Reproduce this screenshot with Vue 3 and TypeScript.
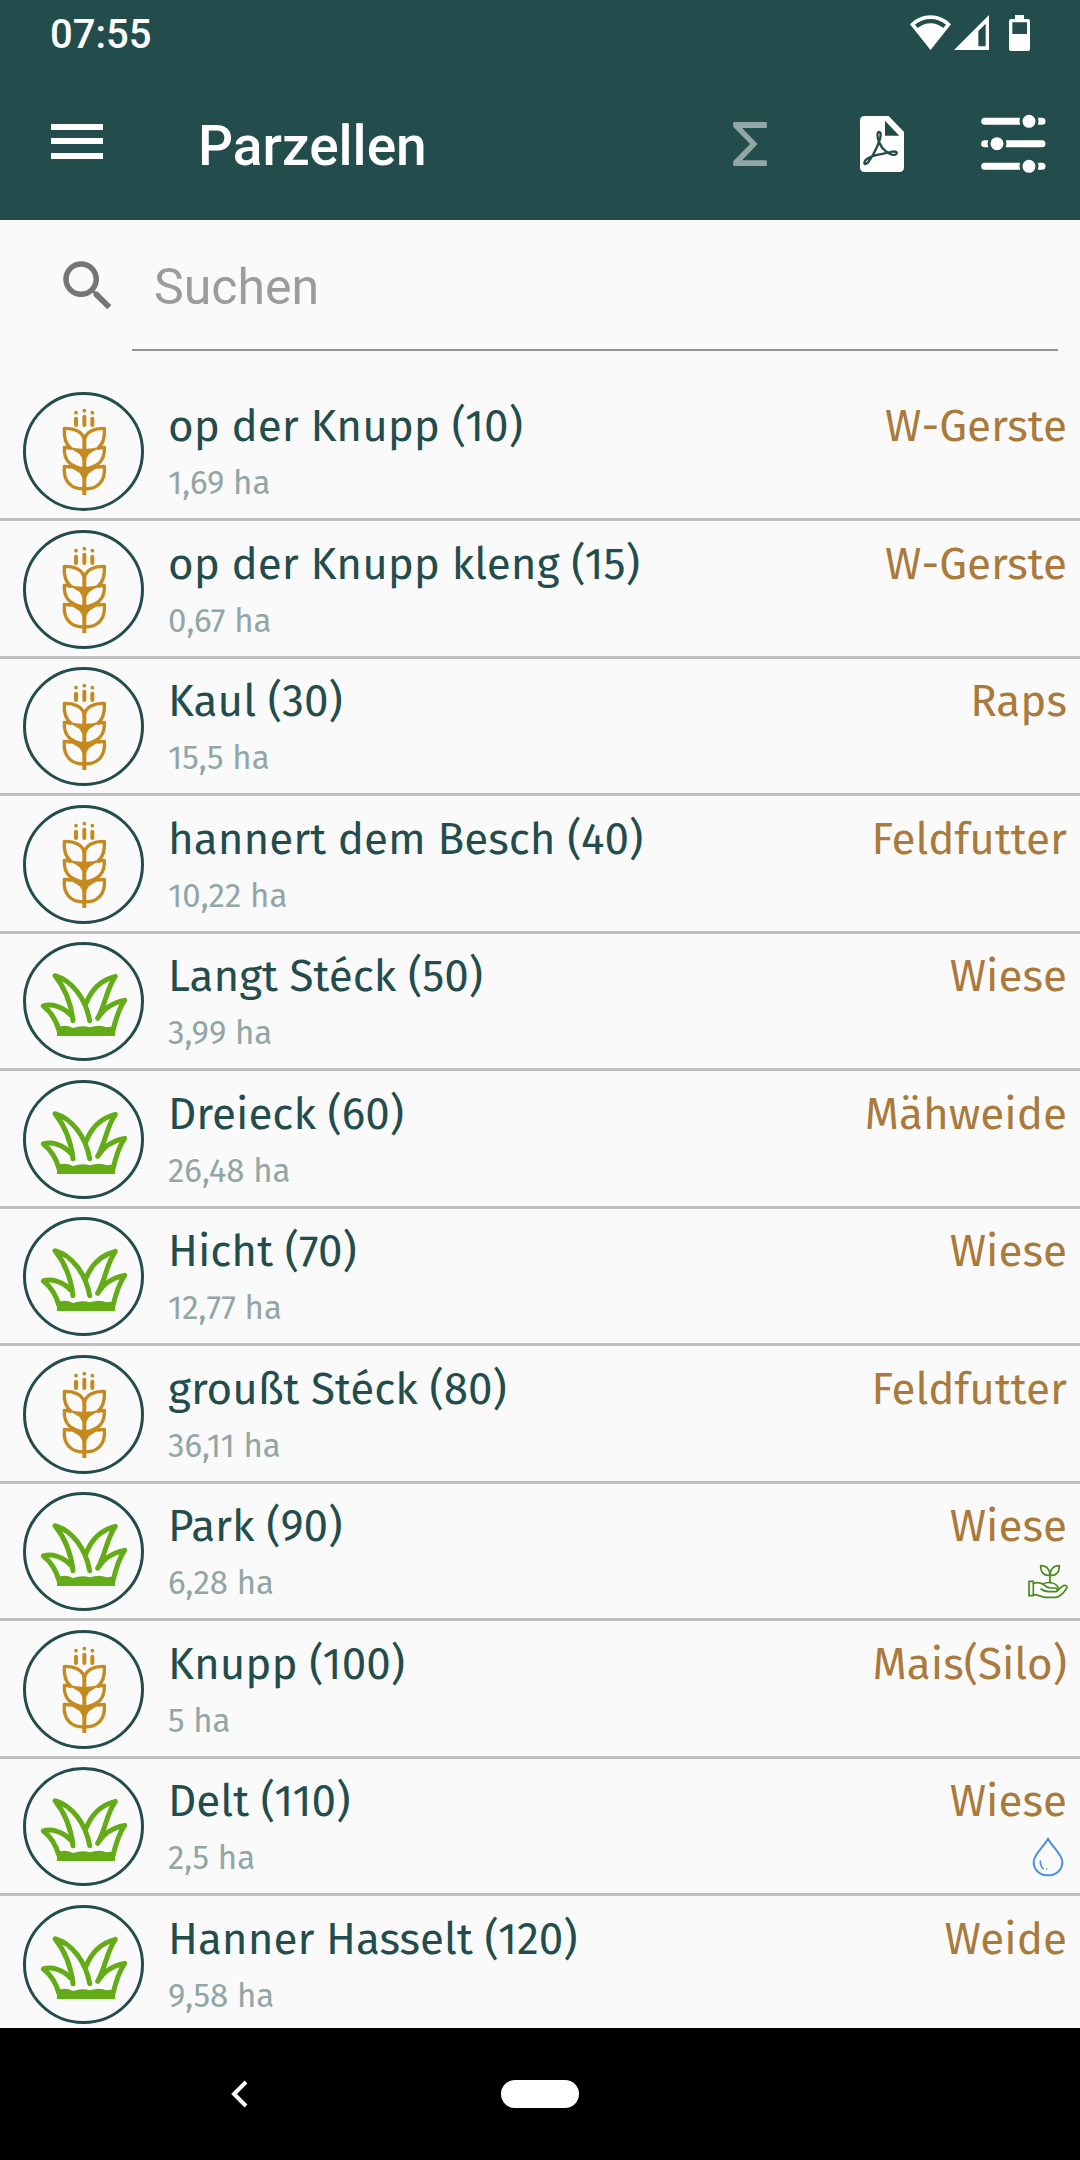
<script setup lang="ts">
import { ref, computed } from 'vue'

type Kind = 'grain' | 'grass'
type Badge = 'plant' | 'water'

interface Parcel {
  name: string
  area: string
  crop: string
  kind: Kind
  badge?: Badge
}

const parcels: Parcel[] = [
  { name: 'op der Knupp (10)', area: '1,69 ha', crop: 'W-Gerste', kind: 'grain' },
  { name: 'op der Knupp kleng (15)', area: '0,67 ha', crop: 'W-Gerste', kind: 'grain' },
  { name: 'Kaul (30)', area: '15,5 ha', crop: 'Raps', kind: 'grain' },
  { name: 'hannert dem Besch (40)', area: '10,22 ha', crop: 'Feldfutter', kind: 'grain' },
  { name: 'Langt Stéck (50)', area: '3,99 ha', crop: 'Wiese', kind: 'grass' },
  { name: 'Dreieck (60)', area: '26,48 ha', crop: 'Mähweide', kind: 'grass' },
  { name: 'Hicht (70)', area: '12,77 ha', crop: 'Wiese', kind: 'grass' },
  { name: 'groußt Stéck (80)', area: '36,11 ha', crop: 'Feldfutter', kind: 'grain' },
  { name: 'Park (90)', area: '6,28 ha', crop: 'Wiese', kind: 'grass', badge: 'plant' },
  { name: 'Knupp (100)', area: '5 ha', crop: 'Mais(Silo)', kind: 'grain' },
  { name: 'Delt (110)', area: '2,5 ha', crop: 'Wiese', kind: 'grass', badge: 'water' },
  { name: 'Hanner Hasselt (120)', area: '9,58 ha', crop: 'Weide', kind: 'grass' },
]

const query = ref('')
const visible = computed(() =>
  parcels.filter((p) => p.name.toLowerCase().includes(query.value.trim().toLowerCase())),
)
</script>

<template>
  <div class="screen">
    <header class="top">
      <div class="status">
        <time>07:55</time>
        <div class="signals" aria-hidden="true">
          <svg class="wifi" width="41" height="36" viewBox="0 0 123 108">
            <path fill="#fff" d="M0 28C36-8 87-8 123 28L61.500 105Z" />
            <path fill="none" stroke="#234d4c" stroke-width="13" d="M19 34C44 13 79 13 104 34" />
          </svg>
          <svg class="cell" width="35" height="36" viewBox="0 0 105 108">
            <path fill="#fff" fill-rule="evenodd" d="M105 0V105H0ZM95 26L73 48V94H95Z" />
          </svg>
          <svg width="21" height="36" viewBox="0 0 63 108">
            <path
              fill="#fff"
              fill-rule="evenodd"
              d="M18 0H45V12H57Q63 12 63 18V102Q63 108 57 108H6Q0 108 0 102V18Q0 12 6 12H18ZM10 22V57H54V22Z"
            />
          </svg>
        </div>
      </div>
      <div class="bar">
        <button class="icon menu" type="button" aria-label="Menü">
          <svg width="52" height="36" viewBox="0 0 52 36">
            <path fill="#fff" d="M0 0H52V6H0ZM0 14H52V20H0ZM0 29H52V35H0Z" />
          </svg>
        </button>
        <h1>Parzellen</h1>
        <div class="actions">
          <button class="icon" type="button" aria-label="Summe">
            <svg width="34" height="44" viewBox="0 0 101 132">
              <path
                fill="#91a6a5"
                d="M0 0H101V18H27L73 66L27 115H101V132H0V118L51 66L0 14Z"
              />
            </svg>
          </button>
          <button class="icon" type="button" aria-label="PDF">
            <svg width="44" height="56" viewBox="0 0 132 168">
              <path
                fill="#fff"
                fill-rule="evenodd"
                d="M14 0H86L132 48V154Q132 168 118 168H14Q0 168 0 154V14Q0 0 14 0ZM75 14V59H118Z"
              />
              <path
                fill="none"
                stroke="#234d4c"
                stroke-width="7"
                stroke-linejoin="round"
                d="M57 78C52 64 50 48 57 48C65 48 62 66 57 78C50 96 38 120 27 135C20 146 13 146 13 140C13 131 27 124 43 119C61 114 82 111 97 107C108 105 113 109 109 114C103 120 88 115 78 106C67 98 61 88 57 78Z"
              />
            </svg>
          </button>
          <button class="icon" type="button" aria-label="Filter">
            <svg width="65" height="60" viewBox="0 0 195 180">
              <path
                fill="none"
                stroke="#fff"
                stroke-width="21"
                stroke-linecap="round"
                d="M11 22H183M11 89H183M11 157H183"
              />
              <g fill="#fff" stroke="#234d4c" stroke-width="9">
                <circle cx="144" cy="22" r="24" />
                <circle cx="48" cy="89" r="24" />
                <circle cx="144" cy="157" r="24" />
              </g>
            </svg>
          </button>
        </div>
      </div>
    </header>

    <main class="content">
      <div class="search">
        <label for="query" aria-label="Suchen">
          <svg width="66" height="66" viewBox="0 0 24 24">
            <path
              fill="#757575"
              d="M15.500 14h-.79l-.28-.27A6.471 6.471 0 0 0 16 9.500 6.500 6.500 0 1 0 9.500 16c1.610 0 3.090-.59 4.230-1.570l.27.28v.79l5 4.990L20.490 19l-4.990-5zm-6 0C7.010 14 5 11.990 5 9.500S7.010 5 9.500 5 14 7.010 14 9.500 11.990 14 9.500 14z"
            />
          </svg>
        </label>
        <input id="query" v-model="query" type="text" placeholder="Suchen" />
      </div>

      <ul class="list">
        <li v-for="p in visible" :key="p.name" class="row">
          <svg class="avatar" width="121" height="119" viewBox="0 0 363 357" aria-hidden="true">
            <ellipse
              cx="181.500"
              cy="178.500"
              rx="177"
              ry="174"
              fill="none"
              stroke="#234d4c"
              stroke-width="9"
            />
            <g v-if="p.kind === 'grain'" fill="none" stroke="#c58a1f" stroke-width="10">
              <path stroke-width="12" stroke-linecap="round" d="M159 80V99M184 74V99M208 80V99" />
              <path stroke-width="11" stroke-linecap="round" d="M159 62h.1M184 56h.1M208 62h.1" />
              <path stroke-width="12" d="M184 134V309" />
              <g stroke-linejoin="round" stroke-linecap="round">
                <path d="M184 142C177 117 150 109 124 109C122 136 130 157 142 168M184 142C191 117 218 109 244 109C246 136 238 157 226 168" />
                <path d="M142 168L124 166C122 206 142 224 184 231C226 224 246 206 244 166L226 168" />
                <path d="M142 225L124 223C120 268 144 291 184 291C224 291 248 268 244 223L226 225" />
              </g>
              <path
                fill="#c58a1f"
                stroke-width="5"
                d="M136 166Q160 174 184 173Q208 174 232 166Q190 176 184 212Q178 176 136 166Z"
              />
              <path
                fill="#c58a1f"
                stroke-width="5"
                d="M136 223Q160 231 184 230Q208 231 232 223Q190 233 184 269Q178 233 136 223Z"
              />
            </g>
            <g
              v-else
              fill="none"
              stroke="#64ab18"
              stroke-width="15"
              stroke-linecap="round"
              stroke-linejoin="round"
            >
              <path d="M108 266C100 236 84 210 61 192C86 184 119 194 142 218" />
              <path d="M150 236C144 184 124 136 96 101C148 116 188 170 200 236" />
              <path d="M189 184C204 146 234 114 277 103C250 142 248 186 224 229C240 202 268 182 305 175C286 202 278 232 270 266" />
              <path
                fill="#64ab18"
                stroke="none"
                d="M102 256Q126 246 150 258Q178 248 200 256Q232 246 250 256Q262 252 276 256V282H102Z"
              />
            </g>
          </svg>
          <div class="info">
            <span class="name">{{ p.name }}</span>
            <span class="area">{{ p.area }}</span>
          </div>
          <div class="use">
            <span class="crop">{{ p.crop }}</span>
            <svg
              v-if="p.badge === 'plant'"
              width="40"
              height="40"
              viewBox="143 186 120 120"
              fill="none"
              stroke="#4a8a1c"
              stroke-width="5"
              stroke-linecap="round"
              stroke-linejoin="round"
            >
              <path d="M146 244H159V287H146ZM209 248V216" />
              <path d="M208 226C190 228 180 216 181 197C199 197 209 208 208 226ZM210 226C228 228 238 216 237 197C219 197 209 208 210 226Z" />
              <path d="M159 250C172 246 182 248 190 254C196 260 202 264 210 264H224C232 264 234 274 226 275H206C196 275 188 272 182 267" />
              <path d="M188 252C200 245 226 245 234 264M231 272L246 259C254 253 264 258 258 266C250 278 240 290 226 292H198C184 292 176 284 159 284" />
            </svg>
            <svg
              v-else-if="p.badge === 'water'"
              width="40"
              height="40"
              viewBox="144 171 120 120"
              fill="none"
              stroke="#4a90e2"
              stroke-width="6"
              stroke-linecap="round"
              stroke-linejoin="round"
            >
              <path d="M204 176C190 202 161 224 161 246C161 270 180 286 204 286C228 286 247 270 247 246C247 224 218 202 204 176Z" />
              <path stroke-width="5" d="M181 243C181 255 184 262 190 266M200 267h.1" />
            </svg>
          </div>
        </li>
      </ul>
    </main>

    <nav class="nav">
      <button class="icon back" type="button" aria-label="Zurück">
        <svg width="18" height="28" viewBox="0 0 18 28">
          <path fill="none" stroke="#fff" stroke-width="4" d="M16 2L4 14L16 26" />
        </svg>
      </button>
      <button class="pill" type="button" aria-label="Startseite"></button>
      <span></span>
    </nav>
  </div>
</template>

<style>
body {
  margin: 0;
}
</style>

<style scoped>
.screen {
  display: flex;
  flex-direction: column;
  height: 100vh;
  background: #fafafa;
  color: #234d4c;
  font-family: Roboto, 'Liberation Sans', sans-serif;
}

.screen svg {
  display: block;
  flex: none;
}

.icon {
  display: block;
  padding: 0;
  border: 0;
  background: none;
}

.top {
  flex: none;
  background: #234d4c;
  color: #fff;
}

.status {
  display: flex;
  justify-content: space-between;
  align-items: center;
  height: 68px;
  padding: 0 50px;
}

.status time {
  font-size: 40px;
  font-weight: 500;
}

.signals {
  display: flex;
  margin-bottom: 2px;
}

.cell {
  margin: 0 20px 0 3px;
}

.bar {
  display: flex;
  align-items: center;
  height: 152px;
  padding: 0 34px 0 51px;
}

.menu {
  margin-bottom: 4px;
}

.bar h1 {
  flex: 1;
  margin: 0 0 0 95px;
  padding-top: 4px;
  font-size: 55px;
  font-weight: 500;
}

.actions {
  display: flex;
  align-items: center;
  gap: 77px;
}

.actions .icon:first-child {
  margin-right: 16px;
}

.content {
  flex: 1;
  min-height: 0;
  overflow: hidden;
}

.search {
  display: flex;
  align-items: center;
  padding: 0 22px 0 55px;
  margin-bottom: 33px;
}

.search input {
  flex: 1;
  min-width: 0;
  height: 131px;
  box-sizing: border-box;
  margin-left: 11px;
  padding: 4px 22px 0;
  border: 0;
  border-bottom: 2px solid #939393;
  outline: 0;
  background: none;
  color: #234d4c;
  font: 50px Roboto, 'Liberation Sans', sans-serif;
}

.search input::placeholder {
  color: #9c9c9c;
  opacity: 1;
}

.list {
  margin: 0;
  padding: 0;
  list-style: none;
  font-family: 'Fira Sans', 'Noto Sans', 'Open Sans', sans-serif;
}

.row {
  display: flex;
  padding: 8px 12px 7px 23px;
  border-bottom: 3px solid #bfbfbf;
}

.row:nth-child(even) {
  padding-top: 9px;
}

.info {
  display: flex;
  flex: 1;
  flex-direction: column;
  min-width: 0;
  margin-left: 24px;
}

.name,
.crop {
  font-size: 44px;
  line-height: 70px;
  white-space: nowrap;
}

.area {
  color: #91a6a5;
  font-size: 33px;
  line-height: 42px;
}

.use {
  display: flex;
  flex-direction: column;
  align-items: flex-end;
}

.crop {
  padding-right: 1px;
  color: #a97a3b;
}

.nav {
  display: grid;
  flex: none;
  grid-template-columns: 1fr auto 1fr;
  align-items: center;
  height: 132px;
  background: #000;
}

.back {
  justify-self: center;
  margin-right: 24px;
}

.pill {
  width: 78px;
  height: 28px;
  padding: 0;
  border: 0;
  border-radius: 14px;
  background: #fff;
}
</style>
